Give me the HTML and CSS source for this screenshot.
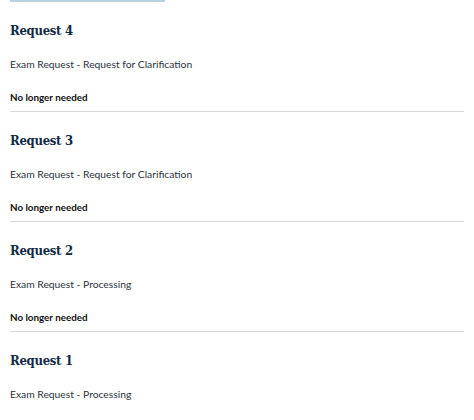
FILE: index.html
```html
<!DOCTYPE html>
<html>
<head>
<meta charset="utf-8">
<link rel="stylesheet" href="styles.css">
</head>
<body>
<div class="page">
  <div class="topbar"></div>
  <ul class="requests">
    <li class="request">
      <h3 class="request-title">Request 4</h3>
      <p class="request-status">Exam Request - Request for Clarification</p>
      <p class="request-note">No longer needed</p>
    </li>
    <li class="request">
      <h3 class="request-title">Request 3</h3>
      <p class="request-status">Exam Request - Request for Clarification</p>
      <p class="request-note">No longer needed</p>
    </li>
    <li class="request">
      <h3 class="request-title">Request 2</h3>
      <p class="request-status">Exam Request - Processing</p>
      <p class="request-note">No longer needed</p>
    </li>
    <li class="request">
      <h3 class="request-title">Request 1</h3>
      <p class="request-status">Exam Request - Processing</p>
      <p class="request-note">No longer needed</p>
    </li>
  </ul>
</div>
</body>
</html>
```
FILE: styles.css
```css
html, body {
  margin: 0;
  padding: 0;
  background: #ffffff;
  overflow: hidden;
}
.page {
  padding: 0 10px;
  font-family: "Source Sans Pro", Lato, "Noto Sans", sans-serif;
}
.topbar {
  width: 155px;
  height: 2px;
  background: #b9d1dd;
}
.requests {
  list-style: none;
  margin: 0;
  padding: 0;
}
.request {
  padding-top: 19px;
  padding-bottom: 7px;
  border-bottom: 1px solid #d6d7d9;
}
.request-title {
  margin: 0;
  font-family: "DejaVu Serif Condensed", "DejaVu Serif", serif;
  font-weight: bold;
  font-size: 13px;
  letter-spacing: -0.3px;
  line-height: 20px;
  color: #112a44;
}
.request-status {
  margin: 15px 0 0;
  font-size: 10.3px;
  line-height: 16px;
  color: #2b323c;
}
.request-note {
  margin: 18px 0 0;
  font-size: 9.8px;
  font-weight: bold;
  line-height: 14px;
  color: #111111;
}
```
